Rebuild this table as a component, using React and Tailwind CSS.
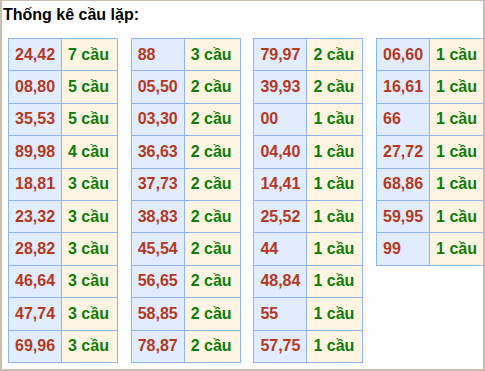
const tables = [
  [
    ["24,42", 7], ["08,80", 5], ["35,53", 5], ["89,98", 4], ["18,81", 3],
    ["23,32", 3], ["28,82", 3], ["46,64", 3], ["47,74", 3], ["69,96", 3],
  ],
  [
    ["88", 3], ["05,50", 2], ["03,30", 2], ["36,63", 2], ["37,73", 2],
    ["38,83", 2], ["45,54", 2], ["56,65", 2], ["58,85", 2], ["78,87", 2],
  ],
  [
    ["79,97", 2], ["39,93", 2], ["00", 1], ["04,40", 1], ["14,41", 1],
    ["25,52", 1], ["44", 1], ["48,84", 1], ["55", 1], ["57,75", 1],
  ],
  [
    ["06,60", 1], ["16,61", 1], ["66", 1], ["27,72", 1], ["68,86", 1],
    ["59,95", 1], ["99", 1],
  ],
];

function LoTable({ rows }) {
  return (
    <div className="w-[110px] shrink-0 border-l border-t border-[#8fb4f2]">
      {rows.map(([pair, count]) => (
        <div key={pair} className="flex h-[32.4px]">
          <div className="w-[53px] flex items-center pl-[6px] bg-[#e1edff] border-r border-b border-[#8fb4f2] text-[#b5381c]">
            {pair}
          </div>
          <div className="flex-1 flex items-center pl-[6px] bg-[#fff5e2] border-r border-b border-[#8fb4f2] text-[#0b7d0b]">
            {count} cầu
          </div>
        </div>
      ))}
    </div>
  );
}

export default function App() {
  return (
    <div
      className="w-[485px] h-[371px] bg-white border-t border-l-2 border-r-2 border-b-2 border-[#cabdad] overflow-hidden"
      style={{ fontFamily: '"Liberation Sans", Arial, sans-serif' }}
    >
      <div className="pt-[5px] pl-[1px] text-[16px] leading-[18px] font-bold text-black">
        Thống kê cầu lặp:
      </div>
      <div className="flex items-start gap-[12.7px] pl-[6px] mt-[14px] text-[16px] font-bold">
        {tables.map((rows, i) => (
          <LoTable key={i} rows={rows} />
        ))}
      </div>
    </div>
  );
}
